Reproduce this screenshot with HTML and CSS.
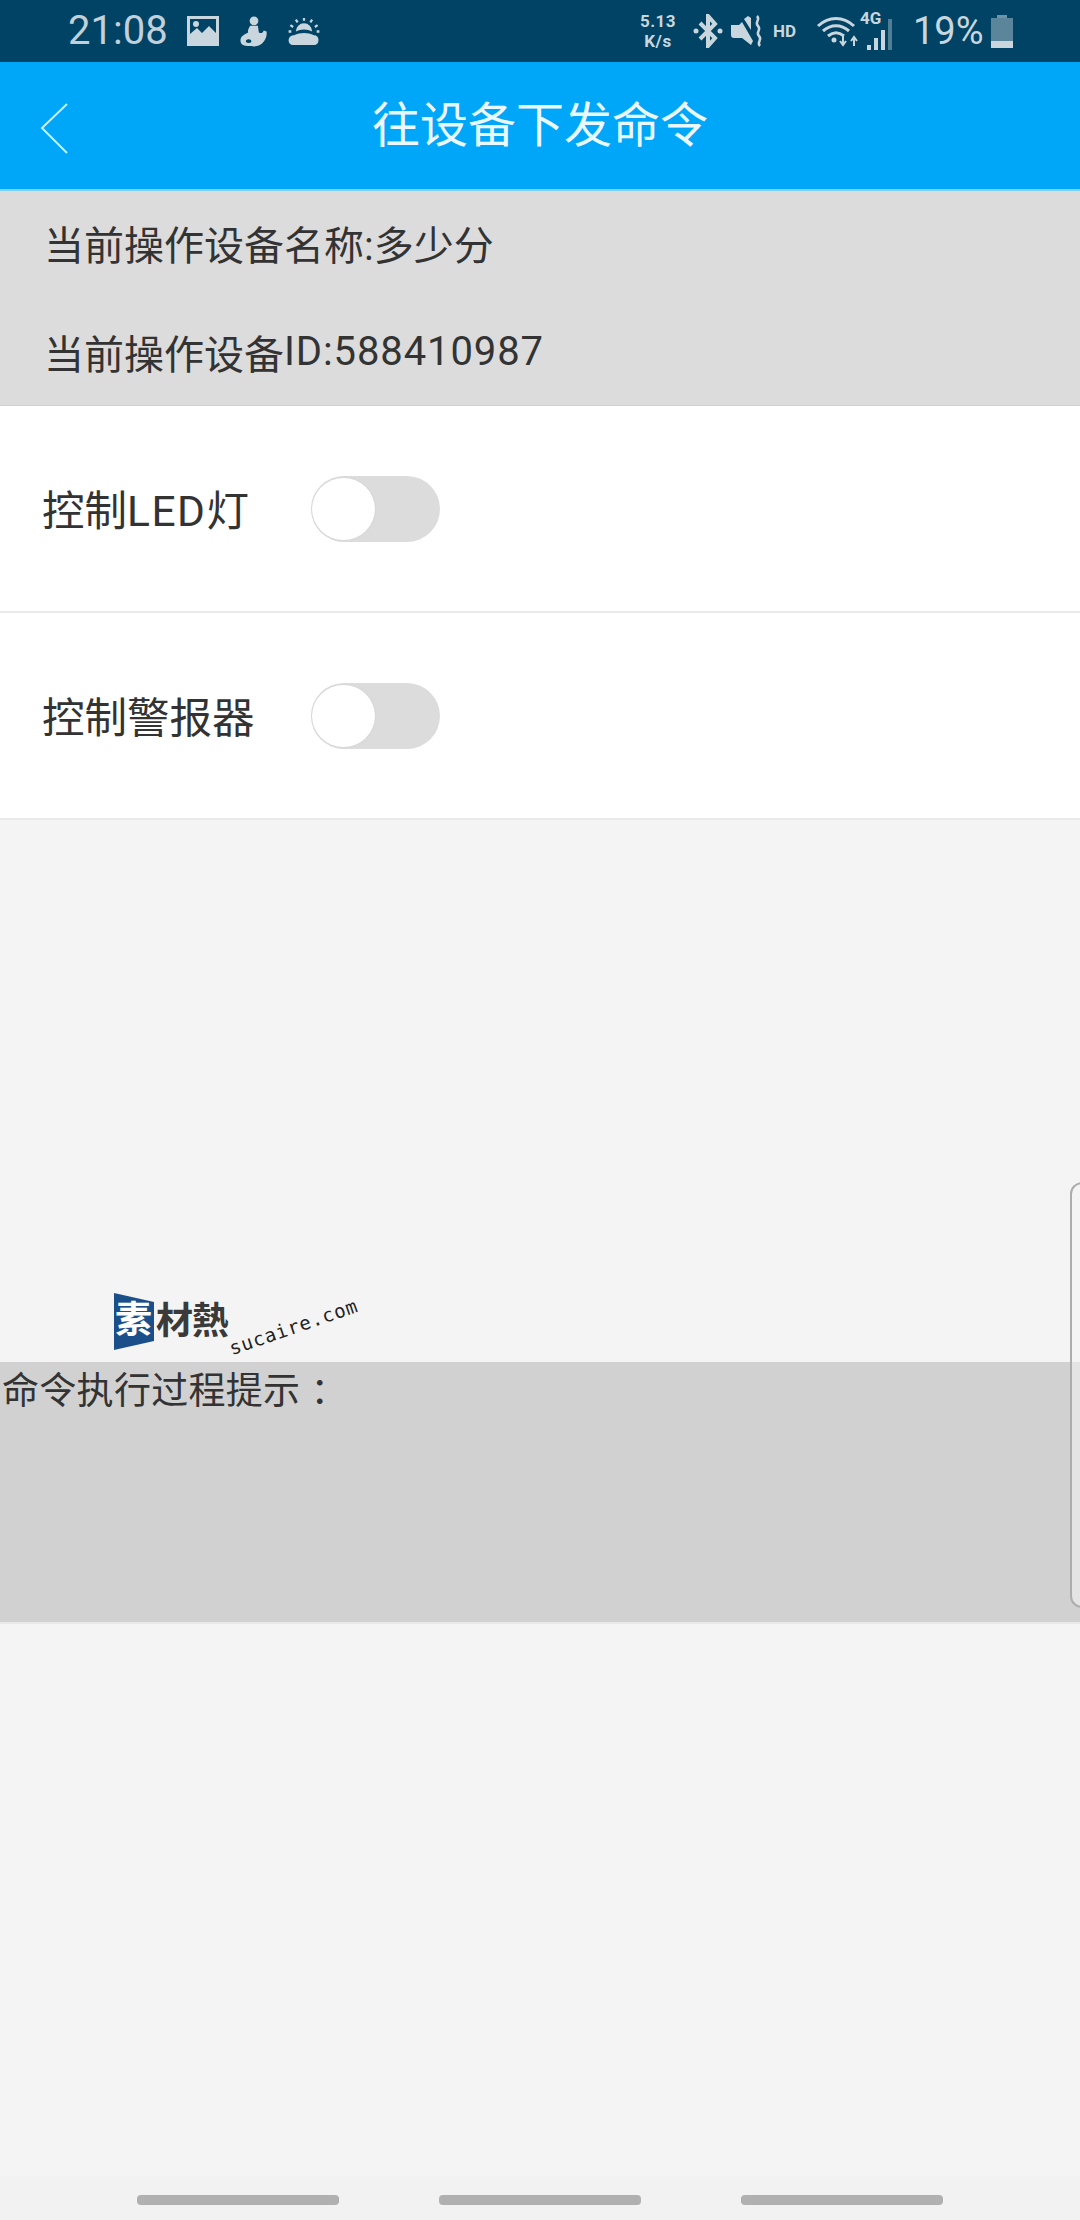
FILE: index.html
```html
<!DOCTYPE html>
<html lang="zh">
<head>
<meta charset="utf-8">
<title>往设备下发命令</title>
<link rel="stylesheet" href="styles.css">
</head>
<body>
<div class="screen">
  <div class="status">
    <div class="status-left">
      <span class="clock">21:08</span>
      <svg class="ic ic-pic" viewBox="0 0 32 30"><path fill-rule="evenodd" d="M0 0H32V30H0ZM3 3V18L10 12 15 17 22 10 29 17V3Z"/><circle cx="9" cy="8" r="3"/></svg>
      <svg class="ic ic-girl" viewBox="0 0 28 32"><circle cx="14" cy="5" r="4.500"/><path d="M10 10h8l1 7c2 1 4 1 5-2l3 1c1 7-4 14-10 15-3 1-6 0-8 0-5 0-9-1-9-6 0-4 4-6 8-8-1-2 1-5 2-7zM8 24c-2 0-3 2-2 3 1 1 4 1 5 0 1-2-1-3-3-3z" fill-rule="evenodd"/></svg>
      <svg class="ic ic-sun" viewBox="0 0 34 32"><path d="M8 16a9 9 0 0 1 18 0c-5-3-13-3-18 0z"/><path d="M6 20c7-3 15-3 22 0 3 0 5 2 5 5 0 4-2 6-5 6H5c-3 0-5-2-5-5 0-4 3-6 6-6z"/><path d="M17 1v3M8 3l2 3M26 3l-2 3M2 9l3 2M32 9l-3 2M0 16h3M31 16h3" stroke="#c9d6de" stroke-width="2.500" fill="none"/></svg>
    </div>
    <div class="status-right">
      <span class="speed"><span class="speed-line">5.13</span><span class="speed-line">K/s</span></span>
      <svg class="ic ic-bt" viewBox="0 0 30 34"><path d="M7 9l15 15-7 8V2l7 8L7 25" fill="none" stroke="#c9d6de" stroke-width="4"/><circle cx="3" cy="17" r="2.500"/><circle cx="27" cy="17" r="2.500"/></svg>
      <svg class="ic ic-mute" viewBox="0 0 32 32"><path d="M0 10h8l3-3 11 19-2 4-9-7H3c-2 0-3-1-3-3z"/><path d="M13 4l4-3 3 2v12z"/><path d="M26 1c4 4-3 6 1 10s-3 6 1 10-3 6 1 10" stroke="#c9d6de" stroke-width="2.500" fill="none"/></svg>
      <span class="hd">HD</span>
      <svg class="ic ic-wifi" viewBox="0 0 44 32"><path d="M2 11c11-10 25-10 36 0M7 16c8-7 18-7 26 0M12 21c5-4 11-4 16 0" stroke="#c9d6de" stroke-width="3" fill="none"/><circle cx="18" cy="25" r="2.500"/><path d="M27 21v8M24 26l3 4 3-4M38 31v-8M35 26l3-4 3 4" stroke="#c9d6de" stroke-width="2" fill="none"/></svg>
      <span class="signal">
        <span class="net">4G</span>
        <svg class="ic ic-bars" viewBox="0 0 30 34"><path d="M1 28h4v5H1zM8 21h4v12H8zM15 13h4v20h-4z"/><path d="M22 2h4v31h-4z" opacity=".4"/></svg>
      </span>
      <span class="pct">19%</span>
      <svg class="ic ic-batt" viewBox="0 0 22 33"><path d="M6 0h10v3H6z" opacity=".55"/><path d="M0 3h22v23H0z" opacity=".45"/><path d="M0 26h22v7H0z"/></svg>
    </div>
  </div>

  <header class="bar">
    <svg class="back" viewBox="0 0 30 54"><path d="M28 2L3 26l25 25"/></svg>
    <h1 class="title">往设备下发命令</h1>
  </header>

  <section class="info">
    <p class="info-line">当前操作设备名称:多少分</p>
    <p class="info-line">当前操作设备<span class="latin">ID:588410987</span></p>
  </section>

  <section class="controls">
    <div class="row">
      <span class="label">控制<span class="latin">LED</span>灯</span>
      <span class="switch"><span class="knob"></span></span>
    </div>
    <div class="row">
      <span class="label">控制警报器</span>
      <span class="switch"><span class="knob"></span></span>
    </div>
  </section>

  <div class="gap"></div>

  <section class="log">命令执行过程提示<span class="colon">：</span></section>

  <div class="rest"></div>

  <nav class="nav">
    <span class="pill"></span>
    <span class="pill"></span>
    <span class="pill"></span>
  </nav>

  <div class="mark">
    <svg class="mark-flag" viewBox="0 0 40 57"><path d="M0 0L40 9V48L0 57Z"/></svg>
    <span class="mark-su">素</span>
    <span class="mark-text">材熱</span>
    <span class="mark-url">sucaire.com</span>
  </div>

  <div class="edge"></div>
</div>
</body>
</html>
```
FILE: styles.css
```css
* { box-sizing: border-box; }
html, body { margin: 0; padding: 0; }
body { font-family: "Roboto", "Noto Sans CJK SC", sans-serif; background: #f4f4f4; }
.screen { position: relative; width: 1080px; height: 2220px; display: flex; flex-direction: column; overflow: hidden; background: #f4f4f4; color: #333; }

.status { height: 62px; flex: none; background: #004364; color: #c9d6de; display: flex; align-items: center; justify-content: space-between; padding: 0 67px 0 68px; }
.status-left, .status-right { display: flex; align-items: center; }
.ic { display: block; fill: #c9d6de; flex: none; }
.clock { font-size: 40px; line-height: 1; color: #c2d0d9; width: 119px; }
.ic-pic { width: 32px; height: 30px; }
.ic-girl { width: 28px; height: 31px; margin-left: 21px; }
.ic-sun { width: 32px; height: 29px; margin-left: 20px; }

.speed { display: flex; flex-direction: column; align-items: center; font-size: 17px; font-weight: 700; letter-spacing: 0.500px; width: 42px; }
.speed-line { display: block; line-height: 20px; }
.ic-bt { width: 30px; height: 34px; margin-left: 14px; }
.ic-mute { width: 32px; height: 32px; margin-left: 8px; }
.hd { font-size: 17px; font-weight: 700; margin-left: 10px; width: 26px; }
.ic-wifi { width: 44px; height: 32px; margin-left: 17px; }
.signal { display: block; position: relative; width: 36px; height: 36px; }
.net { position: absolute; left: 0; top: -3px; font-size: 17px; font-weight: 700; line-height: 16px; }
.ic-bars { position: absolute; right: 0; bottom: -2px; width: 30px; height: 34px; }
.pct { font-size: 38px; line-height: 1; margin-left: 17px; width: 73px; }
.ic-batt { width: 22px; height: 33px; margin-left: 5px; }

.bar { height: 129px; flex: none; background: #00a6f8; border-bottom: 2px solid #7fd0fb; display: flex; align-items: center; justify-content: center; position: relative; }
.back { position: absolute; left: 39px; top: 40px; width: 30px; height: 54px; fill: none; stroke: #c8f0ff; stroke-width: 2; }
.title { margin: 0; font-size: 48px; font-weight: 400; color: #eaf8ff; line-height: 1; }

.info { height: 215px; flex: none; background: #dcdcdc; padding: 0 44px; border-bottom: 1px solid #cfcfcf; }
.info-line { margin: 0; height: 107px; display: flex; align-items: center; font-size: 40px; color: #333; }
.info-line:first-child { padding-bottom: 4px; }
.info-line .latin { letter-spacing: 0.900px; }

.controls { flex: none; background: #fff; }
.row { height: 207px; display: flex; align-items: center; padding-left: 42px; border-bottom: 2px solid #eaeaea; }
.label { font-size: 42.500px; width: 269px; color: #333; margin-top: -3px; }
.label .latin { letter-spacing: 1.500px; }
.switch { display: block; position: relative; width: 129px; height: 66px; border-radius: 33px; background: #dcdcdc; }
.knob { position: absolute; left: 1px; top: 2px; width: 63px; height: 62px; border-radius: 50%; background: #fff; box-shadow: 0 0 2px #ccc; }

.gap { height: 542px; flex: none; }
.log { height: 262px; flex: none; background: #d1d1d1; padding: 6px 2px 0; font-size: 37px; line-height: 48px; letter-spacing: 0.300px; color: #333; border-bottom: 2px solid #e8e8e8; }
.colon { display: inline-block; margin-left: 10px; }
.rest { flex: 1; }
.nav { flex: none; height: 44px; display: flex; justify-content: center; gap: 100px; padding-top: 19px; background: #f2f2f2; }
.pill { display: block; width: 202px; height: 10px; border-radius: 4px; background: #b0b0b0; }

.mark { position: absolute; left: 114px; top: 1293px; width: 250px; height: 60px; }
.mark-flag { position: absolute; left: 0; top: 0; width: 40px; height: 57px; fill: #1a4f8a; }
.mark-su { position: absolute; left: 1px; top: 8px; font-size: 37px; line-height: 40px; font-weight: 700; color: #fff; }
.mark-text { position: absolute; left: 42px; top: 9px; font-size: 37px; line-height: 40px; font-weight: 700; color: #3a3a3a; letter-spacing: -1px; }
.mark-url { position: absolute; left: 119px; top: 45px; font-family: "DejaVu Sans Mono", monospace; font-size: 19px; line-height: 20px; letter-spacing: 0.800px; color: #222; transform: rotate(-19deg); transform-origin: left bottom; white-space: nowrap; }

.edge { position: absolute; right: -14px; top: 1182px; width: 24px; height: 426px; border: 2px solid #adadad; border-radius: 12px 0 0 12px; background: rgba(244,244,244,.55); }
```
